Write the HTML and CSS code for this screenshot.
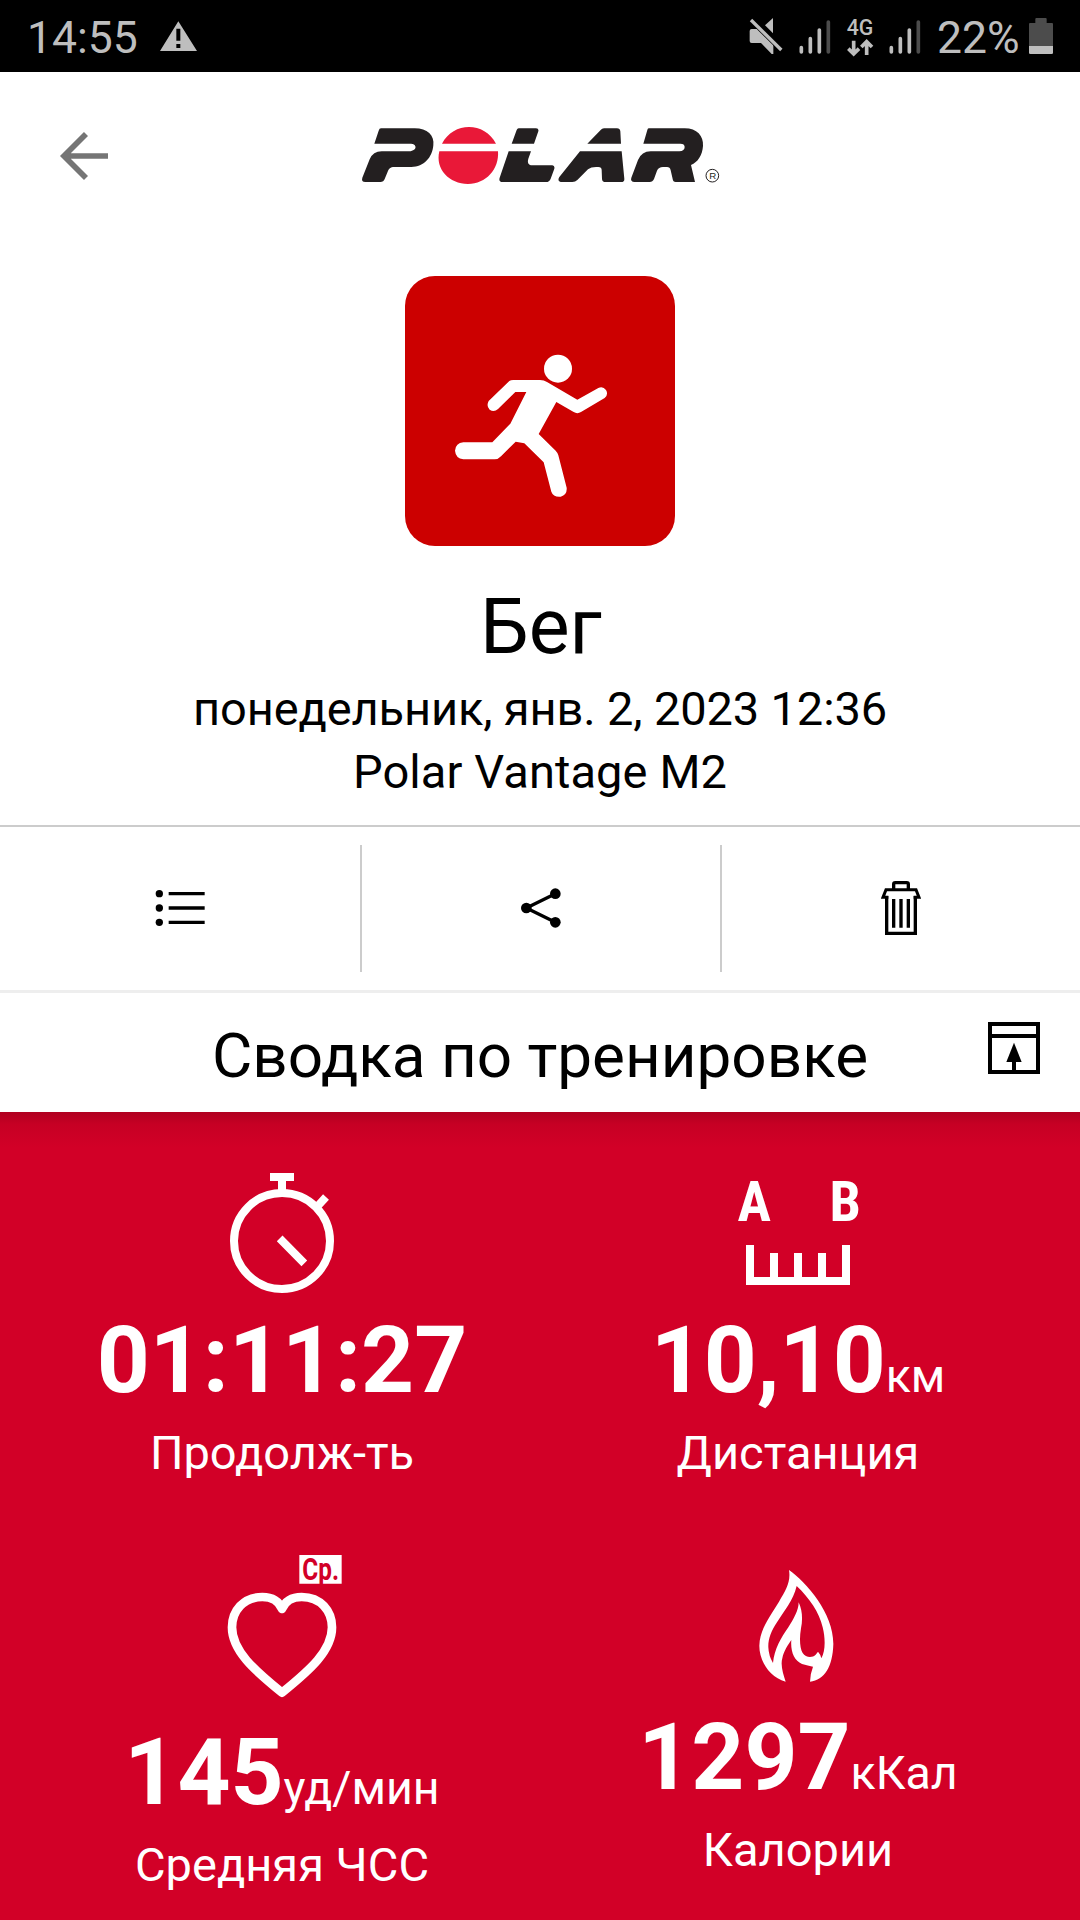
FILE: index.html
```html
<!DOCTYPE html>
<html lang="ru">
<head>
<meta charset="utf-8">
<title>Бег</title>
<link rel="stylesheet" href="styles.css">
</head>
<body>
<div class="status">
  <span class="clock">14:55</span>
  <svg class="warn" viewBox="480 0 111 216"><path fill="#bebebe" fill-rule="evenodd" d="M535 64L591 153H480ZM529 86V122H541V86ZM529 132V144H541V132Z"/></svg>
  <div class="status-right">
    <svg width="50" height="72" viewBox="85 0 150 216"><path fill="#bebebe" d="M160 54V100L136 76ZM96 87H115L161 134V162H156L124 129H96Q90 129 90 123V93Q90 87 96 87Z"/><path d="M94 60L185 150" stroke="#000" stroke-width="14"/><path d="M94 60L185 150" stroke="#bebebe" stroke-width="10"/></svg>
    <svg width="45" height="72" viewBox="235 0 135 216" stroke-width="11" stroke-linecap="round" stroke="#bebebe"><path d="M245 143V156M272 116V156M299 90V156"/><path d="M326 66V156" stroke="#4c4c4c"/></svg>
    <svg width="45" height="72" viewBox="370 0 135 216"><text class="net" x="421" y="104" text-anchor="middle" textLength="80" lengthAdjust="spacingAndGlyphs">4G</text><path d="M402 122V161M386 146L402 162L418 146M441 165V126M425 141L441 125L457 141" fill="none" stroke="#bebebe" stroke-width="11"/></svg>
    <svg width="45" height="72" viewBox="508 0 135 216" stroke-width="11" stroke-linecap="round" stroke="#bebebe"><path d="M518 143V156M545 116V156M572 90V156"/><path d="M599 66V156" stroke="#4c4c4c"/></svg>
    <span class="percent">22%</span>
    <svg width="55" height="72" viewBox="915 0 165 216"><path fill="#4c4c4c" d="M946 57Q946 54 949 54H977Q980 54 980 57V69H996Q999 69 999 72V138H927V72Q927 69 930 69H946Z"/><path fill="#bebebe" d="M927 138H999V158Q999 162 995 162H931Q927 162 927 158Z"/></svg>
  </div>
</div>

<header class="header">
  <svg class="back" viewBox="177 393 150 150" fill="none" stroke="#757575" stroke-width="17"><path d="M258 402L192 468L258 534M194 468H324"/></svg>
  <svg class="logo" viewBox="0 0 1200 270">
    <g fill="#231f20">
      <path d="M118 55H224C262 55 284 77 280 106C277 142 252 171 214 171H163C151 171 146 177 143 185L134 207Q131 216 121 216H76Q63 216 67 203L89 148Q99 124 125 124H208C219 124 229 117 226 109Q224 101 213 101H103L116 62Q118 55 123 55Z"/>
      <path d="M536 55H588Q597 55 595 64L582 101H515L530 60Q532 55 536 55ZM506 124H573L565 146C561 160 566 166 579 166H637Q645 167 643 176L632 206Q628 216 618 216H489Q475 216 479 203Z"/>
      <path d="M792 55H831Q840 55 841 64L843 101H742L782 60Q786 55 792 55ZM720 124H845L853 206Q854 216 843 216H797Q786 216 786 206L785 180Q785 171 775 171Q755 169 744 178L712 210Q706 216 697 216H662Q651 213 658 201Z"/>
      <path d="M926 55H1034C1071 55 1091 78 1089 108C1087 136 1074 156 1053 165L1065 216H1007Q999 216 998 207L992 181Q990 171 981 171H969Q956 171 951 182L942 207Q938 216 929 216H884Q870 215 874 203L894 150Q905 124 932 124H1018Q1034 123 1034 111Q1034 101 1021 101H910L922 60Q923 55 926 55Z"/>
    </g>
    <path fill="#e91838" d="M306 101C340 34 434 34 468 101ZM298 124H474C478 178 438 222 384 222C328 222 285 178 298 124Z"/>
    <circle cx="1117" cy="197" r="19" fill="none" stroke="#231f20" stroke-width="3"/>
    <text class="reg" x="1118" y="207" text-anchor="middle">R</text>
  </svg>
</header>

<section class="activity">
  <svg class="sport" viewBox="45 47 810 810" fill="#fff">
    <circle cx="504" cy="325" r="42"/>
    <path d="M358 362Q362 359 370 359H450Q462 359 471 365L562 418L625 383Q639 377 648 389Q656 403 644 413L573 455Q562 462 551 455L499 425L446 521L497 571Q503 577 505 585L530 682Q532 703 512 709Q490 711 484 694L461 606L403 549L377 544L333 588Q325 597 314 597H220Q197 594 195 571Q197 548 220 546H307L361 490L409 395H376L324 446Q312 457 299 448Q288 437 296 422Z"/>
  </svg>
  <h1 class="name">Бег</h1>
  <p class="meta date">понедельник, янв. 2, 2023 12:36</p>
  <p class="meta">Polar Vantage M2</p>
</section>

<nav class="actions">
  <div class="action">
    <svg width="50" height="40" viewBox="105 204 150 120"><g><circle cx="118" cy="221" r="11"/><circle cx="118" cy="264" r="11"/><circle cx="118" cy="307" r="11"/></g><path stroke="#000" stroke-width="10" d="M146 221H254M146 264H254M146 307H254"/></svg>
  </div>
  <div class="action">
    <svg width="42" height="42" viewBox="1200 201 126 126"><circle cx="1219" cy="264" r="16"/><circle cx="1306" cy="221" r="16"/><circle cx="1306" cy="307" r="16"/><path fill="none" stroke="#000" stroke-width="10" d="M1306 221L1219 264L1306 307"/></svg>
  </div>
  <div class="action">
    <svg width="40" height="56" viewBox="123 180 120 168" fill="none" stroke="#000" stroke-width="10"><path d="M161 208V193Q161 188 166 188H200Q205 188 205 193V208M140 228V340H226V228M161 237V323M183 237V323M205 237V323"/><path stroke-width="9" d="M145 232H129L138 209H228L237 232H221"/></svg>
  </div>
</nav>

<div class="summary-title">
  <h2>Сводка по тренировке</h2>
  <svg class="expand" viewBox="444 606 156 156"><path fill="none" stroke="#000" stroke-width="12" d="M450 612H594V756H450ZM450 648H594M522 756V720"/><path d="M522 668L545 726H499Z"/></svg>
</div>

<main class="stats">
  <div class="stat">
    <svg class="icon" viewBox="30 33 432 432" fill="none" stroke="#fff" stroke-width="24"><circle cx="246" cy="273" r="144"/><path d="M210 81H282M246 81V129M355 166L378 141M239 265L313 340"/></svg>
    <div class="value">01:11:27</div>
    <div class="label">Продолж-ть</div>
  </div>
  <div class="stat">
    <svg class="icon" viewBox="78 33 432 432"><text class="ab" x="163" y="213" text-anchor="middle">A</text><text class="ab" x="436" y="213" text-anchor="middle">B</text><path fill="#fff" d="M138 285H162V381H210V309H234V381H282V309H306V381H354V309H378V381H426V285H450V405H138Z"/></svg>
    <div class="value">10,10<span class="unit">км</span></div>
    <div class="label">Дистанция</div>
  </div>
  <div class="stat">
    <svg class="icon icon-heart" viewBox="30 45 432 516"><path fill="#fff" d="M298 75H425V161H298Z"/><text class="avg" x="362" y="151" text-anchor="middle" textLength="110" lengthAdjust="spacingAndGlyphs">Ср.</text><path fill="none" stroke="#fff" stroke-width="26" stroke-linejoin="round" d="M246 237C236 212 215 201 187 201C130 201 96 243 96 292C96 362 162 420 246 488C330 420 396 362 396 292C396 243 362 201 305 201C277 201 256 212 246 237Z"/></svg>
    <div class="value">145<span class="unit">уд/мин</span></div>
    <div class="label">Средняя ЧСС</div>
  </div>
  <div class="stat">
    <svg class="icon icon-flame" viewBox="18 -15 432 471"><path fill="#fff" fill-rule="evenodd" d="M207 60C260 98 341 190 340 283C338 350 314 390 270 395Q271 370 279 350Q264 347 246 342C222 332 211 304 214 270C205 284 191 302 187 325C181 345 189 371 197 395C148 382 118 333 118 287C119 238 151 198 177 155C197 121 213 96 207 60ZM230 108C220 151 191 184 171 217C154 243 144 267 145 292Q146 318 159 339C163 297 183 264 205 232C220 208 236 182 236 157C248 183 248 211 243 235C238 264 239 294 248 309C257 323 277 324 287 314L294 305Q301 312 304 325C317 302 316 263 308 232C298 187 268 144 230 108Z"/></svg>
    <div class="value">1297<span class="unit">кКал</span></div>
    <div class="label">Калории</div>
  </div>
</main>
</body>
</html>
```
FILE: styles.css
```css
* { box-sizing: border-box; }
body, h1, h2, p { margin: 0; font-weight: 400; }
body {
  width: 1080px;
  height: 1920px;
  overflow: hidden;
  background: #fff;
  color: #000;
  font-family: Roboto, "Liberation Sans", sans-serif;
}
svg { display: block; flex: none; }

.status {
  display: flex;
  align-items: center;
  height: 72px;
  padding-left: 27px;
  background: #000;
  color: #bebebe;
  font-size: 44.5px;
  line-height: 72px;
}
.clock { width: 133px; padding-top: 3px; }
.warn { width: 37px; height: 72px; }
.status-right { display: flex; align-items: center; margin-left: auto; }
.percent { width: 92px; padding: 3px 0 0 4px; }
.net { font: 500 66px Roboto, sans-serif; fill: #bebebe; }

.header {
  display: grid;
  grid-template-columns: 340px 400px 340px;
  height: 128px;
  padding-top: 38px;
}
.back { width: 50px; height: 50px; margin: 21px 0 0 59px; }
.logo { width: 400px; height: 90px; }
.reg { font: 29px "Liberation Sans", sans-serif; fill: #231f20; }

.activity {
  display: flex;
  flex-direction: column;
  align-items: center;
  height: 625px;
  padding-top: 76px;
}
.sport { width: 270px; height: 270px; border-radius: 30px; background: #c00; }
.name { margin-top: 34px; padding-left: 2px; font-size: 77px; line-height: 94px; }
.meta { font-size: 47px; line-height: 63px; letter-spacing: 0.1px; }
.date { margin-top: 3px; letter-spacing: -0.13px; }

.actions {
  display: grid;
  grid-template-columns: repeat(3, 1fr);
  height: 168px;
  padding: 18px 0;
  border-top: 2px solid #ccc;
  border-bottom: 3px solid #eee;
}
.action {
  display: flex;
  align-items: center;
  justify-content: center;
  padding-bottom: 2px;
}
.action + .action { border-left: 2px solid #ccc; }

.summary-title {
  display: grid;
  grid-template-columns: 92px 1fr 92px;
  align-items: center;
  height: 119px;
}
.summary-title h2 {
  grid-column: 2;
  padding-top: 6px;
  text-align: center;
  font-size: 62px;
  line-height: 74px;
}
.expand { width: 52px; height: 52px; margin-top: -9px; }

.stats {
  display: grid;
  grid-template-columns: 1fr 1fr;
  grid-template-rows: 384px 1fr;
  height: 808px;
  padding: 49px 24px 0;
  background: linear-gradient(#b00020, #c60024 12px, #d20027 36px);
  color: #fff;
}
.stat { display: flex; flex-direction: column; align-items: center; }
.icon { width: 144px; height: 144px; }
.icon-heart { height: 172px; }
.icon-flame { height: 157px; }
.value { height: 112px; font-size: 92.5px; font-weight: 700; line-height: 112px; white-space: nowrap; }
.unit { font-size: 46.5px; font-weight: 400; line-height: 0; }
.label { margin-top: 7px; font-size: 47px; line-height: 58px; }
.ab { font: 700 168px "Roboto Condensed", Roboto, sans-serif; fill: #fff; }
.avg { font: 700 92px Roboto, sans-serif; fill: #d20027; }
```
